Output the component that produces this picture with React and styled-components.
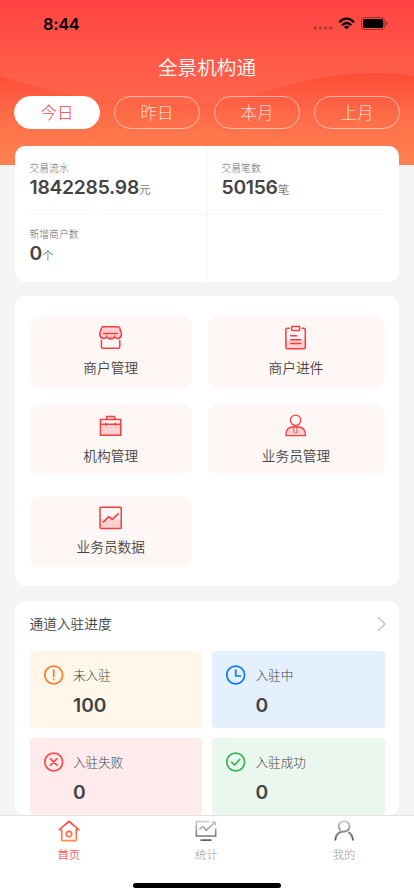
import styled, { createGlobalStyle } from 'styled-components';

const GlobalStyle = createGlobalStyle`
  * {
    box-sizing: border-box;
  }
  body {
    margin: 0;
    font-family: Inter, "Noto Sans CJK SC", sans-serif;
    font-weight: 300;
    color: #444;
    background: #f4f4f4;
  }
  svg {
    display: block;
    flex: none;
  }
`;

const Page = styled.div`
  width: 414px;
  height: 896px;
  display: flex;
  flex-direction: column;
  overflow: hidden;
  background: #f4f4f4;
`;

const Content = styled.main`
  flex: 1;
  min-height: 0;
  overflow: hidden;
`;

const Hero = styled.header`
  position: relative;
  height: 165px;
  background: linear-gradient(#ff4343, #ff694c 65%, #ff7e50);
`;

const WaveSvg = styled.svg`
  position: absolute;
  top: 0;
  left: 0;
`;

const HeroInner = styled.div`
  position: relative;
`;

const StatusBar = styled.div`
  height: 47px;
  padding: 0 26px 0 43px;
  display: flex;
  align-items: center;
  justify-content: space-between;
`;

const Time = styled.span`
  font-size: 16.3px;
  font-weight: 600;
  line-height: 20px;
  letter-spacing: -0.2px;
  color: #000;
`;

const Title = styled.h1`
  margin: 6px 0 0;
  height: 28px;
  line-height: 30px;
  font-size: 19.6px;
  font-weight: 350;
  text-align: center;
  color: #fff;
`;

const Pills = styled.div`
  display: grid;
  grid-template-columns: repeat(4, 86px);
  gap: 14px;
  padding: 15px 14px 0;
`;

const Pill = styled.div`
  height: 33px;
  border: 1.5px solid ${props => props.$active ? '#fff' : 'rgba(255, 255, 255, 0.55)'};
  border-radius: 17px;
  background: ${props => props.$active ? '#fff' : 'transparent'};
  color: ${props => props.$active ? '#f5403f' : 'rgba(255, 255, 255, 0.75)'};
  font-size: 16.5px;
  line-height: 32px;
  text-align: center;
`;

const Card = styled.section`
  width: 384px;
  margin: 0 0 ${props => props.$gap || '0'} 15px;
  background: #fff;
  border-radius: 10px;
`;

const SummaryCard = styled(Card)`
  position: relative;
  margin-top: -19px;
  height: 136px;
  display: grid;
  grid-template-columns: 193px 1fr;
  grid-template-rows: 68.5px 67.5px;
`;

const SummaryCell = styled.div`
  padding: ${props => props.$top ? '14.5px' : '12.5px'} 0 0 ${props => props.$left ? '14.5px' : '13.5px'};
  border-right: ${props => props.$left ? '1px solid #f6f6f6' : '0'};
  ${props => props.$top && `
    background: linear-gradient(#f5f5f5, #f5f5f5) no-repeat ${props.$left ? '14px' : '-14px'} 100% / 100% 1px;
  `}
`;

const SummaryLabel = styled.div`
  font-size: 9.8px;
  line-height: 15px;
  color: #666;
`;

const SummaryValue = styled.div`
  height: 24px;
  line-height: 22px;
  font-size: 19.3px;
  font-weight: 600;
  letter-spacing: -0.25px;
  color: #444;
`;

const Unit = styled.span`
  font-size: 11.7px;
  font-weight: 300;
`;

const MenuCard = styled(Card)`
  height: 290px;
  padding: 20px 14.5px 0;
  display: grid;
  grid-template-columns: 162.5px 177px;
  grid-template-rows: 72px 71px 71px;
  column-gap: 15.5px;
  align-content: start;
`;

const MenuTile = styled.div`
  margin-top: ${props => props.$shift || 0}px;
  height: ${props => props.$height || 71}px;
  padding-top: 9px;
  display: flex;
  flex-direction: column;
  align-items: center;
  border-radius: 10px;
  background: #fff7f6;
`;

const MenuLabel = styled.div`
  margin-top: 7.5px;
  font-size: 13.7px;
  line-height: 20px;
  font-weight: 350;
  color: #444;
`;

const ProgressHead = styled.div`
  height: 50px;
  padding: 0 12px 5px 14.5px;
  display: flex;
  align-items: center;
  justify-content: space-between;
  font-size: 13.7px;
  font-weight: 350;
  line-height: 18px;
`;

const ProgressGrid = styled.div`
  padding: 0 14.5px;
  display: grid;
  grid-template-columns: 1fr 1fr;
  gap: 10px;
`;

const ProgressTile = styled.div`
  height: 77px;
  padding: 14px 0 0 14px;
  display: flex;
  border-radius: 4px;
  background: ${props => props.$bg};
`;

const ProgressText = styled.div`
  margin-left: 9.5px;
`;

const ProgressLabel = styled.div`
  font-size: 12.6px;
  line-height: 22px;
`;

const ProgressValue = styled.div`
  margin-top: 5px;
  font-size: 19.3px;
  line-height: 26px;
  font-weight: 600;
`;

const TabBar = styled.nav`
  height: 81px;
  border-top: 1px solid #e2e2e2;
  background: #fff;
  display: flex;
  flex-direction: column;
  align-items: center;
  justify-content: space-between;
`;

const Tabs = styled.div`
  width: 100%;
  display: grid;
  grid-template-columns: repeat(3, 137.6px);
`;

const Tab = styled.div`
  padding-top: 3px;
  display: flex;
  flex-direction: column;
  align-items: center;
  font-size: 11.3px;
  line-height: 17px;
  font-weight: ${props => props.$active ? 350 : 300};
  color: ${props => props.$active ? '#ff5656' : '#999'};
`;

const TabLabel = styled.span`
  margin-top: 4px;
`;

const HomeIndicator = styled.div`
  width: 148px;
  height: 5px;
  margin-bottom: 8px;
  border-radius: 3px;
  background: #000;
`;

const Waves = () => (
  <WaveSvg width="414" height="165" viewBox="0 0 414 165">
    <defs>
      <linearGradient id="waveBack" gradientUnits="userSpaceOnUse" x1="0" y1="72" x2="0" y2="145">
        <stop offset="0" stopColor="#fb4a33" stopOpacity="0.9" />
        <stop offset="0.45" stopColor="#fd5e3e" stopOpacity="0.6" />
        <stop offset="1" stopColor="#ff7c4d" stopOpacity="0" />
      </linearGradient>
      <linearGradient id="waveFront" gradientUnits="userSpaceOnUse" x1="0" y1="94" x2="0" y2="160">
        <stop offset="0" stopColor="#ff6340" stopOpacity="0.5" />
        <stop offset="1" stopColor="#ff8552" stopOpacity="0.5" />
      </linearGradient>
    </defs>
    <path d="M0 76C55 94 125 108 195 104C270 99 290 75 370 73C390 72.500 405 74 414 76V165H0Z" fill="url(#waveBack)" />
    <path d="M0 106C35 98 70 94 100 95C170 96 215 138 290 138C340 138 370 108 400 105L414 107V165H0Z" fill="url(#waveFront)" />
  </WaveSvg>
);

const StatusIcons = () => (
  <svg width="76" height="16" viewBox="312 16 76 16">
    <g fill="#000" fillOpacity="0.28">
      <circle cx="315.200" cy="28" r="1.800" />
      <circle cx="320.500" cy="28" r="1.800" />
      <circle cx="325.500" cy="28" r="1.800" />
      <circle cx="330.700" cy="28" r="1.800" />
    </g>
    <g fill="none" stroke="#000" strokeWidth="2.400">
      <path d="M339.300 22.300C343.500 17.400 349.700 17.400 353.900 22.300" />
      <path d="M342 25.200C344.700 22.200 348.500 22.200 351.200 25.200" />
    </g>
    <path d="M346.600 29.500L343.900 26.800Q346.600 24.900 349.300 26.800Z" fill="#000" />
    <rect x="361.500" y="17.500" width="23.300" height="12" rx="3.500" fill="none" stroke="#000" strokeOpacity="0.38" />
    <rect x="363" y="19" width="20.300" height="9" rx="2" fill="#000" />
    <path d="M386 21.500V25.500Q387.400 25 387.400 23.500T386 21.500" fill="#000" fillOpacity="0.45" />
  </svg>
);

const MenuSvg = ({ children }) => (
  <svg width="24" height="25" viewBox="0.4 0 24 25" fill="none" stroke="#f63e3e" strokeWidth="1.500" strokeLinecap="round" strokeLinejoin="round">
    {children}
  </svg>
);

const StoreIcon = () => (
  <MenuSvg>
    <path d="M4.300 1.700H19.700Q20.700 1.700 21 2.800L22.800 8.500Q23.300 12 20 13.500Q17.500 14 16 11.800Q14.700 14 12 14Q9.300 14 8 11.800Q6.500 14 4 13.500Q.7 12 1.200 8.500L3 2.800Q3.300 1.700 4.300 1.700Z" fill="#ffd0d0" />
    <path d="M5 8.600H19M8 11.800V11M16 11.800V11M12 13.500V12.500M2.800 15.500V21.800Q2.800 23.300 4.300 23.300H19.700Q21.200 23.300 21.200 21.800V15.500" />
  </MenuSvg>
);

const ClipboardIcon = () => (
  <MenuSvg>
    <path d="M2.300 15H21.700V23.800H2.300Z" fill="#ffd0d0" stroke="none" />
    <path d="M5.500 3.300H3.800Q2.300 3.300 2.300 4.800V22.300Q2.300 23.800 3.800 23.800H20.200Q21.700 23.800 21.700 22.300V4.800Q21.700 3.300 20.200 3.300H18.500" />
    <rect x="8" y="1.500" width="8" height="4" rx=".6" />
    <path d="M7 10.700H13M7 14.700H17M7 18.500H17" />
  </MenuSvg>
);

const BriefcaseIcon = () => (
  <MenuSvg>
    <path d="M1.800 11.300H22.200V22.300H1.800Z" fill="#ffd0d0" stroke="none" />
    <path d="M1.800 6.600H22.200V22.300H1.800ZM8 6.600V3.600H16V6.600M1.800 11.300H22.200M7.300 9.700V12.800M16.700 9.700V12.800" strokeLinecap="butt" strokeLinejoin="miter" />
  </MenuSvg>
);

const StaffIcon = () => (
  <MenuSvg>
    <circle cx="12" cy="7.300" r="5.200" strokeWidth="1.300" />
    <path d="M2.300 22.700V20.500Q3 14.300 9 14H15Q21 14.300 21.700 20.500V22.700Z" fill="#ffd0d0" strokeWidth="1.300" />
    <path d="M10.700 14.200H13.300L13.500 19L12 20.200L10.500 19Z" fill="#fff7f6" strokeWidth="1" />
  </MenuSvg>
);

const ChartIcon = () => (
  <MenuSvg>
    <path d="M1.500 14.500H22.500V23.200H1.500Z" fill="#ffd0d0" stroke="none" />
    <rect x="1.400" y="2.200" width="21.200" height="21.200" rx="1" />
    <path d="M4.800 17L10 11.800L13.800 14.300L19.500 8.800" strokeWidth="1.700" />
  </MenuSvg>
);

const ProgressSvg = ({ color, children }) => (
  <svg width="20" height="20" viewBox="0.3 0 20 20" fill="none" stroke={color} strokeWidth="1.700" strokeLinecap="round" strokeLinejoin="round">
    <circle cx="10" cy="10" r="8.900" />
    {children}
  </svg>
);

const HomeIcon = () => (
  <svg width="24" height="24" viewBox="0 0 24 24" fill="none" stroke="url(#homeStroke)" strokeWidth="1.700" strokeLinejoin="round">
    <defs>
      <linearGradient id="homeStroke" gradientUnits="userSpaceOnUse" x1="0" y1="2" x2="0" y2="22">
        <stop offset="0" stopColor="#f9423e" />
        <stop offset="1" stopColor="#ff8f4e" />
      </linearGradient>
    </defs>
    <path d="M4.700 10.700V20.900Q4.700 21.700 5.500 21.700H18.500Q19.300 21.700 19.300 20.900V10.700H21.700L12 2.300L2.300 10.700H4.700" />
    <circle cx="12" cy="15.100" r="2.700" />
  </svg>
);

const StatsIcon = () => (
  <svg width="24" height="24" viewBox="0 0 24 24" fill="none" stroke="url(#statsStroke)" strokeWidth="1.600">
    <defs>
      <linearGradient id="statsStroke" gradientUnits="userSpaceOnUse" x1="0" y1="1" x2="0" y2="21">
        <stop offset="0" stopColor="#d8d8d8" />
        <stop offset="1" stopColor="#606060" />
      </linearGradient>
    </defs>
    <path d="M15.500 2.600H2.300V17H21.700V9.200M6.500 21.100H17.500M5.500 10.200L9 7.400L12.200 11.300L20.800 3.400M17.800 3.100H21.300V6.600" />
  </svg>
);

const MineIcon = () => (
  <svg width="24" height="24" viewBox="0 0 24 24" fill="none" stroke="url(#mineStroke)" strokeWidth="1.900">
    <defs>
      <linearGradient id="mineStroke" gradientUnits="userSpaceOnUse" x1="0" y1="1" x2="0" y2="22">
        <stop offset="0" stopColor="#d0d0d0" />
        <stop offset="1" stopColor="#585858" />
      </linearGradient>
    </defs>
    <path d="M8.500 11.200Q6.800 9.700 6.800 7.300A5.400 5.200 0 1 1 12.200 12.500Q3.700 12.500 3.200 21.500M16.200 13.200Q20.700 15.700 21 21.500" />
  </svg>
);

const pills = ['今日', '昨日', '本月', '上月'];

const menus = [
  { label: '商户管理', icon: <StoreIcon />, height: 72 },
  { label: '商户进件', icon: <ClipboardIcon />, height: 72 },
  { label: '机构管理', icon: <BriefcaseIcon />, shift: 16 },
  { label: '业务员管理', icon: <StaffIcon />, shift: 16 },
  { label: '业务员数据', icon: <ChartIcon />, shift: 36.5 },
];

const progress = [
  { label: '未入驻', value: 100, bg: '#fff8ea', color: '#ff7b2e', mark: <path d="M10 5.200V11.500M10 14.200V14.400" /> },
  { label: '入驻中', value: 0, bg: '#e4f0fd', color: '#087cff', mark: <path d="M10 5.200V11H14.800" /> },
  { label: '入驻失败', value: 0, bg: '#ffebeb', color: '#ff4949', mark: <path d="M6.800 6.800L13.200 13.200M13.200 6.800L6.800 13.200" /> },
  { label: '入驻成功', value: 0, bg: '#eaf7ee', color: '#3bb354', mark: <path d="M6 10.300L8.900 13L14 7.500" /> },
];

function App() {
  return (
    <Page>
      <GlobalStyle />
      <Content>
        <Hero>
          <Waves />
          <HeroInner>
            <StatusBar>
              <Time>8:44</Time>
              <StatusIcons />
            </StatusBar>
            <Title>全景机构通</Title>
            <Pills>
              {pills.map((name, i) => (
                <Pill key={name} $active={i === 0}>{name}</Pill>
              ))}
            </Pills>
          </HeroInner>
        </Hero>
        <SummaryCard $gap="14px">
          <SummaryCell $left $top>
            <SummaryLabel>交易流水</SummaryLabel>
            <SummaryValue>1842285.98<Unit>元</Unit></SummaryValue>
          </SummaryCell>
          <SummaryCell $top>
            <SummaryLabel>交易笔数</SummaryLabel>
            <SummaryValue>50156<Unit>笔</Unit></SummaryValue>
          </SummaryCell>
          <SummaryCell $left>
            <SummaryLabel>新增商户数</SummaryLabel>
            <SummaryValue>0<Unit>个</Unit></SummaryValue>
          </SummaryCell>
        </SummaryCard>
        <MenuCard $gap="15px">
          {menus.map(item => (
            <MenuTile key={item.label} $shift={item.shift} $height={item.height}>
              {item.icon}
              <MenuLabel>{item.label}</MenuLabel>
            </MenuTile>
          ))}
        </MenuCard>
        <Card>
          <ProgressHead>
            <span>通道入驻进度</span>
            <svg width="11" height="18" viewBox="0 0 11 18" fill="none" stroke="#c4c4c4" strokeWidth="1.500">
              <path d="M2 2L9 9L2 16" />
            </svg>
          </ProgressHead>
          <ProgressGrid>
            {progress.map(item => (
              <ProgressTile key={item.label} $bg={item.bg}>
                <ProgressSvg color={item.color}>{item.mark}</ProgressSvg>
                <ProgressText>
                  <ProgressLabel>{item.label}</ProgressLabel>
                  <ProgressValue>{item.value}</ProgressValue>
                </ProgressText>
              </ProgressTile>
            ))}
          </ProgressGrid>
        </Card>
      </Content>
      <TabBar>
        <Tabs>
          <Tab $active>
            <HomeIcon />
            <TabLabel>首页</TabLabel>
          </Tab>
          <Tab>
            <StatsIcon />
            <TabLabel>统计</TabLabel>
          </Tab>
          <Tab>
            <MineIcon />
            <TabLabel>我的</TabLabel>
          </Tab>
        </Tabs>
        <HomeIndicator />
      </TabBar>
    </Page>
  );
}

export default App;
